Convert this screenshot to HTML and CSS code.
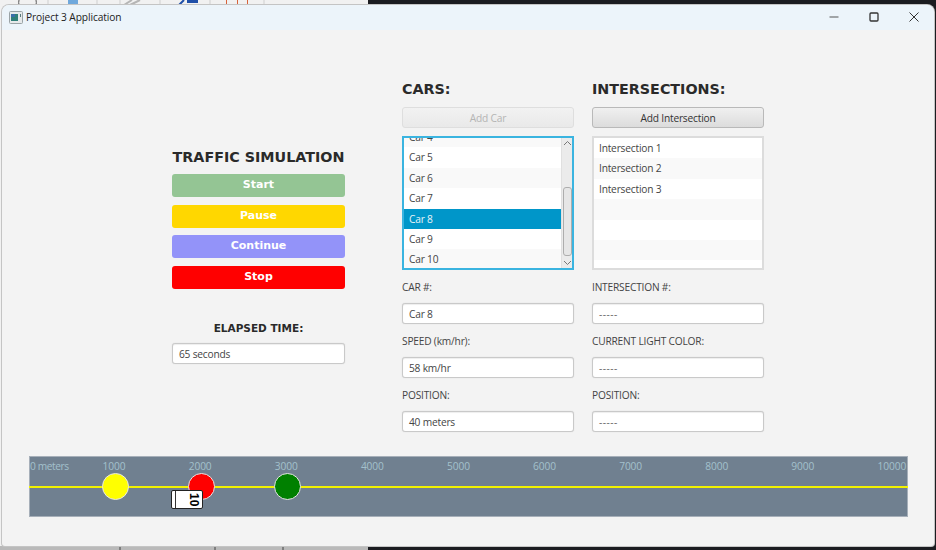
FILE: index.html
```html
<!DOCTYPE html>
<html lang="en">
<head>
    <meta charset="UTF-8">
    <title>Project 3 Application</title>
    <link rel="stylesheet" href="styles.css">
</head>
<body>

<!-- what shows behind the window -->
<svg class="desktop" width="936" height="550" viewBox="0 0 936 550">
    <rect x="0" y="0" width="368" height="550" fill="#f1f1f1"/>
    <rect x="368" y="0" width="568" height="550" fill="#1b1c20"/>
    <path d="M19 5 A10 10 0 0 1 19 0 M36 0 A10 10 0 0 1 36 5" stroke="#555" fill="none"/>
    <rect x="68" y="0" width="10" height="5" fill="#6fa8dc"/>
    <path d="M48 0V5M97 0V5M120 0V5M160 0V5M210 0V5M264 0V5" stroke="#cfcfcf"/>
    <path d="M124 5L132 0M130 5L140 0" stroke="#b5b5b5" stroke-width="2"/>
    <path d="M179 5L184 0" stroke="#1f4fa8" stroke-width="2"/>
    <rect x="187" y="0" width="11" height="3" fill="#1f4fa8"/>
    <path d="M226.500 0V5H237.500V0M237.500 5H247.500V0" stroke="#d8623a" fill="none"/>
    <rect x="0" y="546" width="368" height="4" fill="#b9b9b9"/>
    <path d="M120 546V550M215 546V550M283 546V550" stroke="#444"/>
</svg>

<div class="window">
    <div class="titlebar">
        <svg class="app-icon" width="14" height="13" viewBox="0 0 14 13">
            <rect x="0.500" y="0.500" width="13" height="12" rx="1" fill="#e6e9ea" stroke="#9aa3a6"/>
            <rect x="2" y="3" width="7" height="7" fill="#2f7f78"/>
            <rect x="2" y="3" width="4" height="3" fill="#3a6ea8"/>
            <rect x="11" y="3" width="1" height="3" fill="#55777a"/>
        </svg>
        <span class="title">Project 3 Application</span>
        <div class="win-buttons">
            <svg width="10" height="10" viewBox="0 0 10 10"><path d="M0.500 5H9.500" stroke="#555" stroke-width="1"/></svg>
            <svg width="10" height="10" viewBox="0 0 10 10"><rect x="1" y="1" width="8" height="8" rx="1" fill="none" stroke="#333" stroke-width="1.300"/></svg>
            <svg width="10" height="10" viewBox="0 0 10 10"><path d="M0.500 0.500L9.500 9.500M9.500 0.500L0.500 9.500" stroke="#333" stroke-width="1"/></svg>
        </div>
    </div>

    <div class="content">
        <div class="controls">
            <h1 class="sim-title">TRAFFIC SIMULATION</h1>
            <button class="action start">Start</button>
            <button class="action pause">Pause</button>
            <button class="action continue">Continue</button>
            <button class="action stop">Stop</button>
            <h2 class="elapsed-label">ELAPSED TIME:</h2>
            <div class="field">65 seconds</div>
        </div>

        <div class="column">
            <h2 class="heading">CARS:</h2>
            <button class="add disabled">Add Car</button>
            <div class="list focused">
                <div class="rows scrolled">
                    <div class="row">Car 4</div>
                    <div class="row">Car 5</div>
                    <div class="row">Car 6</div>
                    <div class="row">Car 7</div>
                    <div class="row selected">Car 8</div>
                    <div class="row">Car 9</div>
                    <div class="row">Car 10</div>
                </div>
                <div class="scrollbar">
                    <svg width="9" height="6" viewBox="0 0 9 6"><path d="M1 5L4.500 1.500L8 5" fill="none" stroke="#777"/></svg>
                    <div class="thumb"></div>
                    <svg width="9" height="6" viewBox="0 0 9 6"><path d="M1 1L4.500 4.500L8 1" fill="none" stroke="#777"/></svg>
                </div>
            </div>
            <label class="label">CAR #:</label>
            <div class="field">Car 8</div>
            <label class="label">SPEED (km/hr):</label>
            <div class="field">58 km/hr</div>
            <label class="label">POSITION:</label>
            <div class="field">40 meters</div>
        </div>

        <div class="column">
            <h2 class="heading">INTERSECTIONS:</h2>
            <button class="add">Add Intersection</button>
            <div class="list">
                <div class="rows">
                    <div class="row">Intersection 1</div>
                    <div class="row">Intersection 2</div>
                    <div class="row">Intersection 3</div>
                    <div class="row"></div>
                    <div class="row"></div>
                    <div class="row"></div>
                    <div class="row"></div>
                </div>
            </div>
            <label class="label">INTERSECTION #:</label>
            <div class="field empty">-----</div>
            <label class="label">CURRENT LIGHT COLOR:</label>
            <div class="field empty">-----</div>
            <label class="label">POSITION:</label>
            <div class="field empty">-----</div>
        </div>
    </div>

    <div class="track">
        <div class="ticks">
            <span class="tick first">0 meters</span>
            <span class="tick">1000</span>
            <span class="tick">2000</span>
            <span class="tick">3000</span>
            <span class="tick">4000</span>
            <span class="tick">5000</span>
            <span class="tick">6000</span>
            <span class="tick">7000</span>
            <span class="tick">8000</span>
            <span class="tick">9000</span>
            <span class="tick last">10000</span>
        </div>
        <div class="road"></div>
        <div class="light yellow"></div>
        <div class="light red"></div>
        <div class="light green"></div>
        <div class="car"><span class="car-num">10</span></div>
    </div>
</div>

</body>
</html>
```

FILE: styles.css
```css
html, body {
    margin: 0;
    padding: 0;
}
body {
    width: 936px;
    height: 550px;
    overflow: hidden;
    position: relative;
    font-family: "Open Sans", "Noto Sans", sans-serif;
    color: #333;
}
.desktop {
    position: absolute;
    left: 0;
    top: 0;
}
.window {
    position: absolute;
    left: 2px;
    top: 5px;
    width: 932px;
    height: 541px;
    background: #f3f3f3;
    border-radius: 7px 7px 3px 3px;
    box-shadow: 0 0 0 1px #c4c4c4;
    overflow: hidden;
}
.titlebar {
    height: 24px;
    padding-bottom: 1px;
    background: #ecf4fa;
    display: flex;
    align-items: center;
    padding-left: 7px;
    font-size: 10.200px;
    letter-spacing: -0.100px;
    color: #222;
}
.app-icon {
    margin-right: 3px;
}
.title {
    flex: 1;
}
.win-buttons {
    display: flex;
    gap: 30px;
    padding-right: 15px;
}
.content {
    display: flex;
    height: 426px;
    padding-left: 170px;
}
.controls {
    width: 173px;
    margin-right: 57px;
    padding-top: 118px;
    display: flex;
    flex-direction: column;
}
.sim-title {
    font-family: "DejaVu Sans", sans-serif;
    font-size: 14.300px;
    line-height: 18px;
    margin: 0 0 8px;
    text-align: center;
    color: #2a2a2a;
    white-space: nowrap;
}
.action {
    height: 23px;
    border: none;
    border-radius: 3px;
    margin-bottom: 7.500px;
    color: white;
    font-family: "DejaVu Sans", sans-serif;
    font-weight: bold;
    font-size: 11px;
    padding: 0 0 2px;
}
.start { background: #94c594; }
.pause { background: #ffd700; }
.continue { background: #9393f9; }
.stop { background: red; }
.elapsed-label {
    font-family: "DejaVu Sans", sans-serif;
    font-size: 10.500px;
    line-height: 14px;
    text-align: center;
    margin: 25px 0 8px;
    color: #2a2a2a;
}
.column {
    width: 172px;
    margin-right: 18px;
    display: flex;
    flex-direction: column;
}
.heading {
    font-family: "DejaVu Sans", sans-serif;
    font-size: 14.300px;
    line-height: 18px;
    margin: 50px 0 9px;
    color: #2a2a2a;
}
.add {
    height: 21px;
    border: 1px solid #b9b9b9;
    border-radius: 3px;
    background: linear-gradient(#f0f0f0, #dcdcdc);
    font-family: inherit;
    font-size: 10.200px;
    letter-spacing: -0.200px;
    color: #333;
    padding: 0;
    margin-bottom: 8px;
}
.add.disabled {
    background: linear-gradient(#f2f2f2, #e9e9e9);
    border-color: #dedede;
    color: #b4b4b4;
}
.list {
    height: 134px;
    box-sizing: border-box;
    border: 2px solid #dcdcdc;
    background: white;
    display: flex;
    overflow: hidden;
    margin-bottom: 8px;
}
.list.focused {
    border-color: #3ab4e0;
}
.rows {
    flex: 1;
    min-width: 0;
}
/* list is scrolled so only the bottom of the first row shows */
.rows.scrolled {
    margin-top: -11px;
}
.row {
    height: 20.400px;
    line-height: 20px;
    padding-left: 5px;
    font-size: 10.200px;
    letter-spacing: -0.200px;
    color: #444;
}
.row:nth-child(even) {
    background: #f9f9f9;
}
.rows.scrolled .row:nth-child(even) {
    background: white;
}
.rows.scrolled .row:nth-child(odd) {
    background: #f9f9f9;
}
.rows.scrolled .row.selected {
    background: #0096c9;
    color: #e8f4f8;
}
.scrollbar {
    width: 10px;
    background: #ebebeb;
    border-left: 1px solid #e0e0e0;
    display: flex;
    flex-direction: column;
    align-items: center;
}
.scrollbar svg {
    margin: 2px 0;
    flex: none;
}
.thumb {
    width: 9px;
    height: 71px;
    margin-top: 39px;
    margin-bottom: 2px;
    border: 1px solid #adadad;
    border-radius: 3px;
    background: #e6e6e6;
    box-sizing: border-box;
}
.label {
    font-size: 10.200px;
    letter-spacing: -0.200px;
    line-height: 14px;
    color: #444;
    margin-top: 2px;
    margin-bottom: 9px;
}
.field {
    height: 21px;
    box-sizing: border-box;
    border: 1px solid #c9c9c9;
    border-radius: 3px;
    background: white;
    box-shadow: 0 0 1px #ccc, inset 0 1px 1px #eee;
    padding-left: 6px;
    line-height: 21px;
    font-size: 10.200px;
    letter-spacing: -0.200px;
    color: #444;
    margin-bottom: 8px;
}
.field.empty {
    letter-spacing: 0.500px;
    color: #666;
}
.track {
    position: relative;
    margin-left: 27px;
    width: 879px;
    height: 61px;
    background: #708090;
    box-shadow: 0 0 0 1px #a6afb9 inset;
}
.ticks {
    display: flex;
    padding-top: 3px;
    font-size: 10.200px;
    letter-spacing: -0.100px;
    line-height: 14px;
    color: #a3c0cc;
}
.tick {
    flex: none;
    width: 86.100px;
    text-align: center;
}
.tick.first {
    width: 42px;
    padding-left: 1px;
    box-sizing: border-box;
    text-align: left;
    white-space: nowrap;
    letter-spacing: -0.400px;
}
.tick.last {
    margin-left: 3px;
}
.road {
    position: absolute;
    left: 0;
    right: 0;
    top: 30px;
    height: 2px;
    background: #f2f200;
}
.light {
    position: absolute;
    top: 17px;
    width: 25px;
    height: 25px;
    border: 1px solid #e6e6e6;
    border-radius: 50%;
}
.light.yellow { left: 73px; background: yellow; }
.light.red { left: 159px; background: red; }
.light.green { left: 245px; background: green; }
.car {
    position: absolute;
    left: 142px;
    top: 34px;
    width: 32px;
    height: 19px;
    box-sizing: border-box;
    border: 1px solid #222;
    border-radius: 2px;
    background: white;
    display: flex;
    align-items: center;
    justify-content: flex-end;
}
.car::before {
    content: "";
    position: absolute;
    left: 3px;
    top: 0;
    bottom: 0;
    width: 1px;
    background: #333;
}
.car-num {
    writing-mode: vertical-rl;
    font-family: "Liberation Sans", sans-serif;
    font-weight: bold;
    font-size: 12px;
    line-height: 12px;
    color: black;
    margin-right: 2px;
}
```
